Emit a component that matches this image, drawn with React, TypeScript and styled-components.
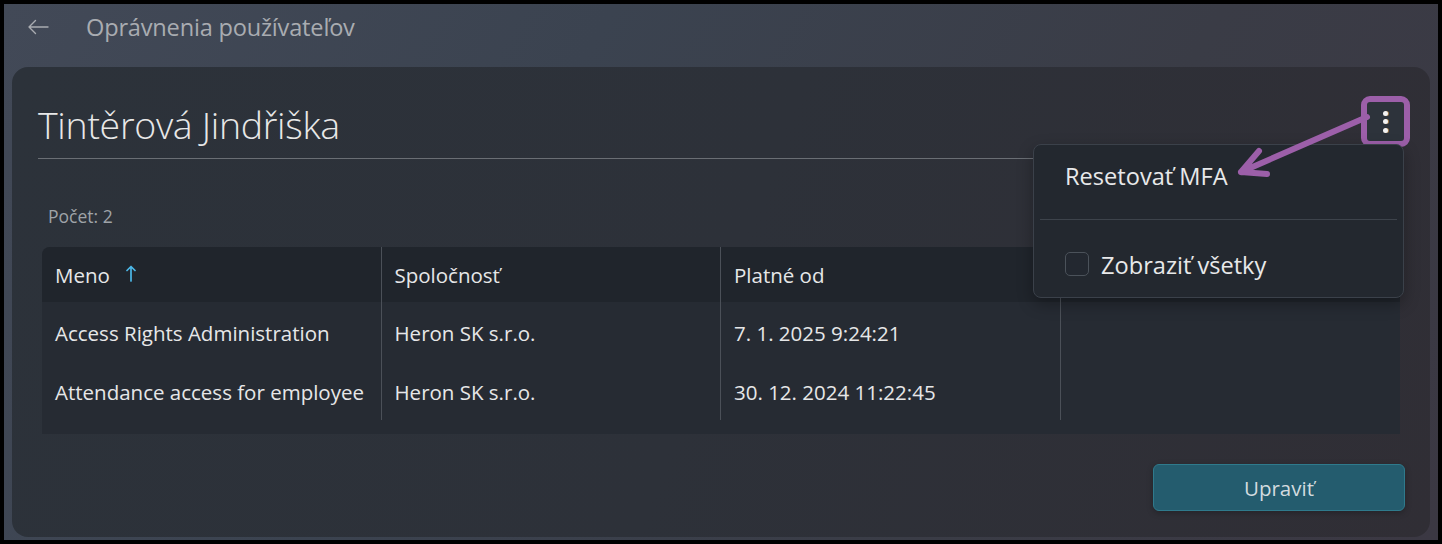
import { createGlobalStyle } from 'styled-components'
import styled from 'styled-components'

const GlobalStyle = createGlobalStyle`
  html, body {
    margin: 0;
    padding: 0;
    background: #000;
  }
  body {
    font-family: 'Open Sans', 'Noto Sans', sans-serif;
  }
`

const rows = [
  { name: 'Access Rights Administration', company: 'Heron SK s.r.o.', validFrom: '7. 1. 2025 9:24:21' },
  { name: 'Attendance access for employee', company: 'Heron SK s.r.o.', validFrom: '30. 12. 2024 11:22:45' },
]

export default function App() {
  return (
    <>
      <GlobalStyle />
      <Screen>
        <Frame>
          <TopBar>
            <BackButton aria-label="Späť">
              <svg width="22" height="16" viewBox="0 0 22 16" fill="none">
                <path d="M21 8H2M8.5 1.5L2 8l6.5 6.5" stroke="#a9acb1" strokeWidth="1.4" strokeLinecap="round" strokeLinejoin="round" />
              </svg>
            </BackButton>
            <PageTitle>Oprávnenia používateľov</PageTitle>
          </TopBar>

          <Card>
            <TitleRow>
              <UserName>Tintěrová Jindřiška</UserName>
              <Highlight>
                <KebabButton aria-label="Viac">
                  <Dot />
                  <Dot />
                  <Dot />
                </KebabButton>
              </Highlight>
            </TitleRow>

            <Count>Počet: 2</Count>

            <Table>
              <HeaderRow>
                <HeadCell>
                  Meno
                  <SortIcon width="10" height="17" viewBox="0 0 10 17" fill="none">
                    <path d="M5 16V2M1 5.5L5 1.5l4 4" stroke="#4cb8e8" strokeWidth="1.7" strokeLinecap="round" strokeLinejoin="round" />
                  </SortIcon>
                </HeadCell>
                <HeadCell>Spoločnosť</HeadCell>
                <HeadCell>Platné od</HeadCell>
                <HeadCell $last />
              </HeaderRow>
              {rows.map(r => (
                <BodyRow key={r.name}>
                  <Cell>{r.name}</Cell>
                  <Cell>{r.company}</Cell>
                  <Cell>{r.validFrom}</Cell>
                  <Cell $last />
                </BodyRow>
              ))}
              <TableFoot />
            </Table>

            <Footer>
              <PrimaryButton>Upraviť</PrimaryButton>
            </Footer>

            <Menu>
              <MenuItem>Resetovať MFA</MenuItem>
              <MenuDivider />
              <MenuCheckItem>
                <CheckBox />
                Zobraziť všetky
              </MenuCheckItem>
            </Menu>
          </Card>

          <Annotation width="1434" height="536" viewBox="0 0 1434 536" fill="none">
            <path
              d="M1363 113L1237 168M1237 168L1255 147M1237 168L1263 170"
              stroke="#9c5fa9"
              strokeWidth="6"
              strokeLinecap="round"
              strokeLinejoin="round"
            />
          </Annotation>
        </Frame>
      </Screen>
    </>
  )
}

const Screen = styled.div`
  width: 1442px;
  height: 544px;
  padding: 4px;
  box-sizing: border-box;
  background: #000;
`

const Frame = styled.div`
  position: relative;
  width: 1434px;
  height: 536px;
  display: flex;
  flex-direction: column;
  background: linear-gradient(120deg, #424957 0%, #3b4350 35%, #3a3c46 70%, #3b3843 100%);
  overflow: hidden;
`

const TopBar = styled.div`
  height: 63px;
  display: flex;
  align-items: center;
  padding: 0 0 17px 22px;
  box-sizing: border-box;
`

const BackButton = styled.div`
  width: 24px;
  height: 24px;
  display: flex;
  align-items: center;
  justify-content: center;
  margin-right: 36px;
`

const PageTitle = styled.div`
  font-size: 23.6px;
  color: #a9acb1;
  letter-spacing: -0.2px;
`

const Card = styled.div`
  position: relative;
  flex: 1;
  margin: 0 8px 3px 8px;
  padding: 0 26px 26px 26px;
  border-radius: 16px;
  background: linear-gradient(110deg, #2c323a 0%, #2d3139 50%, #302e35 100%);
  display: flex;
  flex-direction: column;
`

const TitleRow = styled.div`
  height: 92px;
  display: flex;
  align-items: center;
  justify-content: space-between;
  border-bottom: 1px solid #6a6e74;
  box-sizing: border-box;
  padding-top: 26px;
`

const UserName = styled.div`
  font-size: 37.5px;
  font-weight: 300;
  color: #e8e8e8;
  letter-spacing: -0.3px;
  margin-top: -3px;
`

const Highlight = styled.div`
  align-self: flex-start;
  margin-top: 3px;
  margin-right: -6px;
  width: 49px;
  height: 51px;
  box-sizing: border-box;
  border: 6px solid #9c5fa9;
  border-radius: 9px;
  display: flex;
  align-items: center;
  justify-content: center;
  background: #2d333b;
`

const KebabButton = styled.div`
  display: flex;
  flex-direction: column;
  align-items: center;
  gap: 3.5px;
`

const Dot = styled.span`
  width: 5px;
  height: 5px;
  border-radius: 50%;
  background: #f2f2f2;
  box-shadow: 1px 0 0 rgba(240, 170, 80, 0.6);
`

const Count = styled.div`
  margin: 45px 0 19px 10px;
  font-size: 17.5px;
  line-height: 24px;
  color: #9fa3a8;
`

const Table = styled.div`
  margin: 0 4px;
  background: #262b33;
  border-top-left-radius: 8px;
  border-top-right-radius: 8px;
  display: flex;
  flex-direction: column;
`

const HeaderRow = styled.div`
  display: grid;
  grid-template-columns: repeat(4, 1fr);
  height: 55px;
  background: #20252c;
  border-top-left-radius: 8px;
  border-top-right-radius: 8px;
`

const BodyRow = styled.div`
  display: grid;
  grid-template-columns: repeat(4, 1fr);
  height: 59px;
`

const HeadCell = styled.div<{ $last?: boolean }>`
  display: flex;
  align-items: center;
  padding: 1px 0 0 13px;
  font-size: 20.5px;
  color: #e6e7e8;
  border-right: ${({ $last }) => ($last ? 'none' : '1px solid #4b5058')};
`

const Cell = styled.div<{ $last?: boolean }>`
  display: flex;
  align-items: center;
  padding: 3px 0 0 13px;
  font-size: 20.5px;
  color: #e6e7e8;
  white-space: nowrap;
  border-right: ${({ $last }) => ($last ? 'none' : '1px solid #4b5058')};
`

const SortIcon = styled.svg`
  margin-left: 16px;
  margin-top: -4px;
`

const TableFoot = styled.div`
  height: 14px;
`

const Footer = styled.div`
  margin-top: auto;
  display: flex;
  justify-content: flex-end;
`

const PrimaryButton = styled.div`
  width: 252px;
  height: 47px;
  box-sizing: border-box;
  display: flex;
  align-items: center;
  justify-content: center;
  background: #245c6e;
  border: 1px solid #2f7a8c;
  border-radius: 6px;
  color: #d3dbdf;
  font-size: 20.5px;
  box-shadow: 0 2px 6px rgba(0, 0, 0, 0.25);
  margin-right: -1px;
`

const Menu = styled.div`
  position: absolute;
  top: 77px;
  right: 26px;
  width: 371px;
  height: 154px;
  box-sizing: border-box;
  background: #23282f;
  border: 1px solid #3b414a;
  border-radius: 8px;
  box-shadow: 0 6px 16px rgba(0, 0, 0, 0.3);
  padding: 0 6px;
  display: flex;
  flex-direction: column;
`

const MenuItem = styled.div`
  height: 74px;
  display: flex;
  align-items: center;
  padding: 0 0 12px 25px;
  box-sizing: border-box;
  font-size: 23.6px;
  color: #e8e9ea;
`

const MenuDivider = styled.div`
  height: 1px;
  background: #3d434b;
`

const MenuCheckItem = styled.div`
  flex: 1;
  display: flex;
  align-items: center;
  gap: 12px;
  padding: 12px 0 0 25px;
  font-size: 23.6px;
  color: #e8e9ea;
`

const CheckBox = styled.span`
  width: 24px;
  height: 24px;
  box-sizing: border-box;
  border: 1px solid #4b525a;
  border-radius: 5px;
  background: #232830;
  margin-top: -2px;
`

const Annotation = styled.svg`
  position: absolute;
  left: 0;
  top: 0;
  pointer-events: none;
`
